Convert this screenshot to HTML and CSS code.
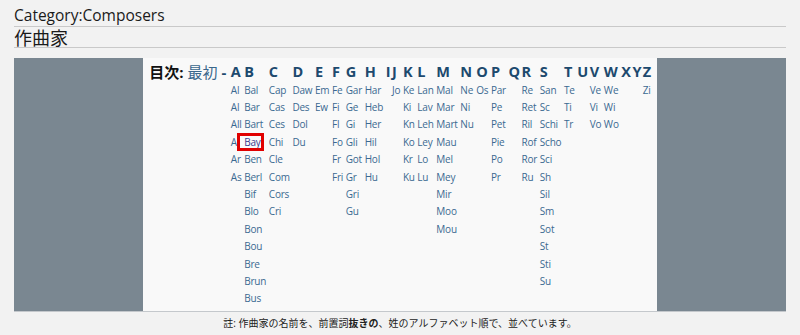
FILE: index.html
```html
<!DOCTYPE html>
<html lang="ja">
<head>
<meta charset="utf-8">
<title>Category:Composers</title>
<link rel="stylesheet" href="styles.css">
</head>
<body>
<h1 class="title">Category:Composers</h1>
<h2 class="subtitle">作曲家</h2>
<div class="panel">
  <div class="side"></div>
  <div class="center">
    <div class="toc">
      <div class="lead"><b class="lead-label">目次:</b> <a class="lead-link">最初</a> <span class="dash">-</span></div>
      <div class="col"><a class="letter">A</a><ul><li>Al</li><li>Al</li><li>All</li><li>A</li><li>Ar</li><li>As</li></ul></div>
      <div class="col"><a class="letter">B</a><ul><li>Bal</li><li>Bar</li><li>Bart</li><li><span class="hl">Bay</span></li><li>Ben</li><li>Berl</li><li>Bif</li><li>Blo</li><li>Bon</li><li>Bou</li><li>Bre</li><li>Brun</li><li>Bus</li></ul></div>
      <div class="col"><a class="letter">C</a><ul><li>Cap</li><li>Cas</li><li>Ces</li><li>Chi</li><li>Cle</li><li>Com</li><li>Cors</li><li>Cri</li></ul></div>
      <div class="col"><a class="letter">D</a><ul><li>Daw</li><li>Des</li><li>Dol</li><li>Du</li></ul></div>
      <div class="col"><a class="letter">E</a><ul><li>Em</li><li>Ew</li></ul></div>
      <div class="col"><a class="letter">F</a><ul><li>Fe</li><li>Fi</li><li>Fl</li><li>Fo</li><li>Fr</li><li>Fri</li></ul></div>
      <div class="col"><a class="letter">G</a><ul><li>Gar</li><li>Ge</li><li>Gi</li><li>Gli</li><li>Got</li><li>Gr</li><li>Gri</li><li>Gu</li></ul></div>
      <div class="col"><a class="letter">H</a><ul><li>Har</li><li>Heb</li><li>Her</li><li>Hil</li><li>Hol</li><li>Hu</li></ul></div>
      <div class="col"><a class="letter">I</a><ul></ul></div>
      <div class="col"><a class="letter">J</a><ul><li>Jo</li></ul></div>
      <div class="col"><a class="letter">K</a><ul><li>Ke</li><li>Ki</li><li>Kn</li><li>Ko</li><li>Kr</li><li>Ku</li></ul></div>
      <div class="col"><a class="letter">L</a><ul><li>Lan</li><li>Lav</li><li>Leh</li><li>Ley</li><li>Lo</li><li>Lu</li></ul></div>
      <div class="col"><a class="letter">M</a><ul><li>Mal</li><li>Mar</li><li>Mart</li><li>Mau</li><li>Mel</li><li>Mey</li><li>Mir</li><li>Moo</li><li>Mou</li></ul></div>
      <div class="col"><a class="letter">N</a><ul><li>Ne</li><li>Ni</li><li>Nu</li></ul></div>
      <div class="col"><a class="letter">O</a><ul><li>Os</li></ul></div>
      <div class="col"><a class="letter">P</a><ul><li>Par</li><li>Pe</li><li>Pet</li><li>Pie</li><li>Po</li><li>Pr</li></ul></div>
      <div class="col"><a class="letter">Q</a><ul></ul></div>
      <div class="col"><a class="letter">R</a><ul><li>Re</li><li>Ret</li><li>Ril</li><li>Rof</li><li>Ror</li><li>Ru</li></ul></div>
      <div class="col"><a class="letter">S</a><ul><li>San</li><li>Sc</li><li>Schi</li><li>Scho</li><li>Sci</li><li>Sh</li><li>Sil</li><li>Sm</li><li>Sot</li><li>St</li><li>Sti</li><li>Su</li></ul></div>
      <div class="col"><a class="letter">T</a><ul><li>Te</li><li>Ti</li><li>Tr</li></ul></div>
      <div class="col"><a class="letter">U</a><ul></ul></div>
      <div class="col"><a class="letter">V</a><ul><li>Ve</li><li>Vi</li><li>Vo</li></ul></div>
      <div class="col"><a class="letter">W</a><ul><li>We</li><li>Wi</li><li>Wo</li></ul></div>
      <div class="col"><a class="letter">X</a><ul></ul></div>
      <div class="col"><a class="letter">Y</a><ul></ul></div>
      <div class="col"><a class="letter">Z</a><ul><li>Zi</li></ul></div>
    </div>
  </div>
  <div class="side"></div>
</div>
<p class="note">註: 作曲家の名前を、前置詞<b>抜きの</b>、姓のアルファベット順で、並べています。</p>
</body>
</html>
```
FILE: styles.css
```css
html, body {
  margin: 0;
  padding: 0;
  background: #f2f2f2;
}
body {
  padding: 0 14px;
  font-family: "Open Sans", "Noto Sans CJK JP", sans-serif;
  color: #222;
}
.title {
  margin: 0;
  padding-top: 5px;
  font-size: 15.5px;
  font-weight: normal;
  line-height: 21px;
  color: #1a1a1a;
  border-bottom: 1px solid #c9c9c9;
}
.subtitle {
  margin: 0;
  font-size: 18px;
  font-weight: normal;
  line-height: 20px;
  color: #1a1a1a;
  font-family: "Noto Sans CJK JP", sans-serif;
  border-bottom: 1px solid #c9c9c9;
}
.panel {
  margin-top: 10px;
  display: flex;
  height: 253px;
  border-bottom: 1px solid #c4c8cc;
}
.side {
  width: 129px;
  flex: 0 0 129px;
  background: #7a8791;
}
.center {
  flex: 1;
  background: #f9f9f9;
  display: flex;
  justify-content: center;
  padding-top: 6px;
}
.toc {
  display: flex;
  align-items: flex-start;
  gap: 2.6px;
}
.lead {
  font-size: 15px;
  line-height: 16px;
  white-space: nowrap;
  margin-right: 2px;
}
.lead-label {
  color: #111;
  font-weight: bold;
}
.lead-link {
  color: #3a678c;
}
.dash {
  color: #1d4a6e;
  font-weight: bold;
}
.col {
  display: flex;
  flex-direction: column;
}
.letter {
  display: block;
  font-size: 14.5px;
  line-height: 16px;
  margin-bottom: 1.5px;
  font-weight: bold;
  letter-spacing: -1.2px;
  color: #1d4a6e;
}
.col ul {
  list-style: none;
  margin: 0;
  padding: 0;
}
.col li {
  font-size: 10px;
  line-height: 17.4px;
  color: #3b6991;
  white-space: nowrap;
  letter-spacing: -0.2px;
}
.hl {
  position: relative;
  color: #3b3b8f;
}
.hl::after {
  content: "";
  position: absolute;
  left: -7px;
  right: -3px;
  top: -2px;
  bottom: -2px;
  border: 3.5px solid #e10000;
}
.note {
  margin: 4px 0 0;
  text-align: center;
  font-size: 10px;
  line-height: 14px;
  color: #222;
}
.note b {
  font-weight: bold;
}
```
